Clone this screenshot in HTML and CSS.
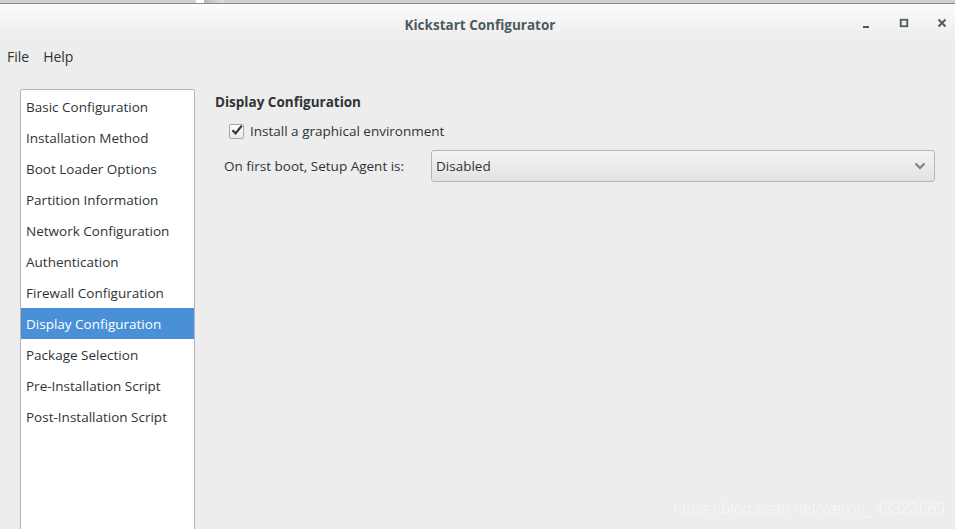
FILE: index.html
```html
<!DOCTYPE html>
<html>
<head>
<meta charset="utf-8">
<link rel="stylesheet" href="styles.css">
</head>
<body>
<div class="topstrip"><div class="strip-thumb"></div></div>
<div class="titlebar">
  <div class="title">Kickstart Configurator</div>
  <div class="controls">
    <svg class="ctl" width="14" height="14" viewBox="0 0 14 14"><rect x="4" y="10" width="6" height="2" fill="#4e5b62"/></svg>
    <svg class="ctl" width="14" height="14" viewBox="0 0 14 14"><rect x="3.75" y="3.75" width="6.5" height="6.5" fill="none" stroke="#4e5b62" stroke-width="1.8"/></svg>
    <svg class="ctl" width="14" height="14" viewBox="0 0 14 14"><path d="M3.5 3.5 L10.5 10.5 M10.5 3.5 L3.5 10.5" stroke="#4e5b62" stroke-width="2"/></svg>
  </div>
</div>
<div class="menubar">
  <span class="menu">File</span>
  <span class="menu">Help</span>
</div>
<div class="main">
  <div class="sidebar">
    <div class="item">Basic Configuration</div>
    <div class="item">Installation Method</div>
    <div class="item">Boot Loader Options</div>
    <div class="item">Partition Information</div>
    <div class="item">Network Configuration</div>
    <div class="item">Authentication</div>
    <div class="item">Firewall Configuration</div>
    <div class="item selected">Display Configuration</div>
    <div class="item">Package Selection</div>
    <div class="item">Pre-Installation Script</div>
    <div class="item">Post-Installation Script</div>
  </div>
  <div class="content">
    <div class="heading">Display Configuration</div>
    <label class="check-row">
      <span class="checkbox"><svg width="14" height="14" viewBox="0 0 14 14"><path d="M2.5 7.2 L5.6 10.4 L11.8 2.6" fill="none" stroke="#2e3436" stroke-width="2.2"/></svg></span>
      <span>Install a graphical environment</span>
    </label>
    <div class="agent-row">
      <span class="agent-label">On first boot, Setup Agent is:</span>
      <div class="combo">
        <span>Disabled</span>
        <svg width="12" height="8" viewBox="0 0 12 8"><path d="M1.5 1.5 L6 6 L10.5 1.5" fill="none" stroke="#7b7f80" stroke-width="2"/></svg>
      </div>
    </div>
  </div>
</div>
<div class="watermark">https://blog.csdn.net/weixin_43323669</div>
</body>
</html>
```
FILE: styles.css
```css
html, body {
  margin: 0;
  padding: 0;
}
body {
  width: 955px;
  height: 529px;
  overflow: hidden;
  background: #ededed;
  font-family: "Open Sans", Lato, sans-serif;
  font-size: 13.5px;
  line-height: 18px;
  color: #2e3436;
  position: relative;
}
.topstrip {
  height: 3px;
  background: #cfcfcf;
  border-bottom: 1px solid #8a8a8a;
  position: relative;
}
.strip-thumb {
  position: absolute;
  left: 196px;
  top: 0;
  width: 28px;
  height: 3px;
  background: linear-gradient(90deg, #fff 0 30%, #bbb 30%, #ddd);
}
.titlebar {
  height: 38px;
  background: linear-gradient(#fbfbfb, #ececec);
  display: flex;
  align-items: center;
  justify-content: center;
  position: relative;
}
.title {
  font-weight: bold;
  font-size: 13.5px;
  color: #4c5a61;
  margin-left: 5px;
  margin-top: 3px;
}
.controls {
  position: absolute;
  right: 6px;
  top: 12px;
  display: flex;
  gap: 24px;
}
.ctl { display: block; }
.menubar {
  height: 30px;
  display: flex;
  align-items: center;
  padding-left: 7px;
  gap: 14px;
  font-size: 14px;
}
.main {
  display: flex;
  margin-top: 17px;
}
.sidebar {
  margin-left: 20px;
  width: 173px;
  height: 460px;
  background: #fff;
  border: 1px solid #b6b6b6;
  border-radius: 2px 2px 0 0;
  padding-top: 1px;
}
.item {
  height: 31px;
  line-height: 33px;
  padding-left: 5px;
  white-space: nowrap;
}
.item.selected {
  background: #4a90d9;
  color: #fff;
}
.content {
  margin-left: 20px;
  flex: 1;
  margin-right: 20px;
}
.heading {
  font-weight: bold;
  margin-top: 4px;
}
.check-row {
  display: flex;
  align-items: center;
  margin-left: 14px;
  margin-top: 11px;
  gap: 6px;
}
.checkbox {
  width: 13px;
  height: 13px;
  border: 1px solid #a8a8a8;
  border-radius: 2px;
  background: linear-gradient(#fff, #e8e8e8);
  position: relative;
}
.checkbox svg {
  position: absolute;
  left: 0;
  top: -2px;
}
.agent-row {
  display: flex;
  align-items: center;
  margin-left: 9px;
  margin-top: 10px;
}
.agent-label {
  width: 207px;
}
.combo {
  flex: 1;
  height: 30px;
  border: 1px solid #b6b6b6;
  border-radius: 3px;
  background: linear-gradient(#f4f4f4, #e2e2e2);
  display: flex;
  align-items: center;
  justify-content: space-between;
  padding: 0 8px 0 4px;
}
.watermark {
  position: absolute;
  left: 673px;
  top: 500px;
  font-family: "Liberation Sans", Arial, sans-serif;
  font-size: 16px;
  color: #f7f7f7;
  text-shadow: 0 0 1px #e3e3e3;
}
```
